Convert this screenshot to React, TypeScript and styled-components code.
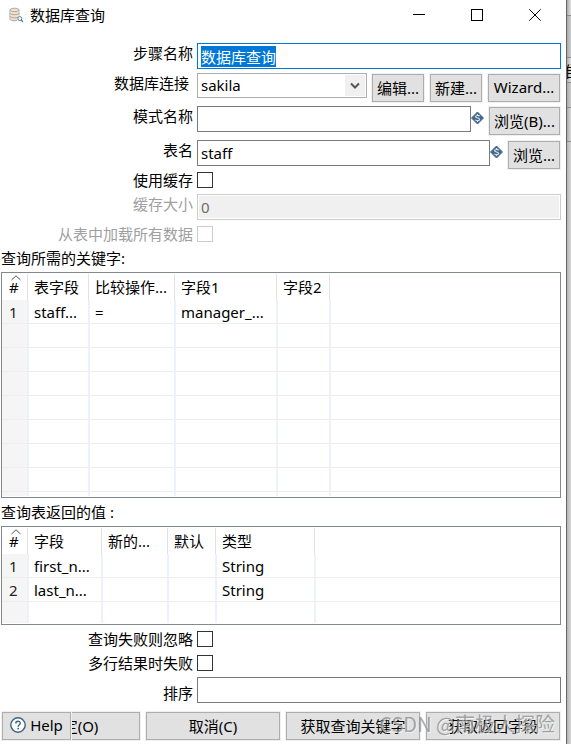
import React, { useEffect, useRef } from 'react';
import styled, { createGlobalStyle, css } from 'styled-components';

const GlobalStyle = createGlobalStyle`
  *, *::before, *::after { box-sizing: border-box; }
  body { margin: 0; background: #fff; }
  body, button, input, select, table {
    font-family: "Noto Sans", "Noto Sans CJK SC", sans-serif;
    font-size: 15px;
    color: #000;
  }
`;

const Screen = styled.div`
  display: flex;
  min-height: 100vh;
  overflow: hidden;
`;

const Dialog = styled.main`
  flex: 1;
  min-width: 0;
  display: flex;
  flex-direction: column;
  background: #fff;
  border-right: 1px solid #666;
`;

const Backdrop = styled.aside`
  flex: none;
  width: 4px;
  overflow: hidden;
  background: linear-gradient(to right, #b4b4b4, #d8d8d8);
`;

const BackdropBand = styled.div<{ $height: number; $tone: string }>`
  display: flex;
  justify-content: center;
  align-items: center;
  height: ${(p) => p.$height}px;
  border-bottom: 1px solid #8c8c8c;
  background: linear-gradient(to right, #a8a8a8, ${(p) => p.$tone});
`;

const TitleBar = styled.header`
  display: flex;
  align-items: center;
  height: 30px;
  padding: 0 2px 0 8px;
`;

const Title = styled.h1`
  flex: 1;
  margin: 0 0 0 6px;
  font-size: 15px;
  font-weight: 400;
  line-height: 22px;
`;

const CaptionButton = styled.button`
  display: flex;
  align-items: center;
  justify-content: center;
  width: 58px;
  height: 30px;
  padding: 0;
  border: 0;
  background: transparent;
`;

const Form = styled.form`
  display: flex;
  flex-direction: column;
  padding: 13px 5px 3px 0;
`;

const Row = styled.div<{ $gap?: number }>`
  display: grid;
  grid-template-columns: 193px minmax(0, 1fr);
  column-gap: 4px;
  margin-top: ${(p) => p.$gap ?? 0}px;
`;

const Label = styled.label<{ $muted?: boolean; $inset?: boolean; $low?: boolean; $tight?: boolean }>`
  text-align: right;
  white-space: nowrap;
  line-height: ${(p) => (p.$tight ? 16 : 20)}px;
  padding-right: ${(p) => (p.$inset ? 4 : 0)}px;
  padding-top: ${(p) => (p.$low ? 6 : 0)}px;
  color: ${(p) => (p.$muted ? '#a0a0a0' : '#000')};
`;

const Controls = styled.div`
  display: flex;
  align-items: flex-start;
  gap: 4px;
`;

const FieldWithIcon = styled.div`
  flex: 1;
  min-width: 0;
  display: flex;
`;

const TextField = styled.input`
  flex: 1;
  min-width: 0;
  width: 100%;
  height: 26px;
  padding: 0 3px;
  border: 1px solid #7a7a7a;
  border-radius: 0;
  background: #fff;
  outline: none;

  &:focus { border-color: #0078d7; }
  &::selection { background: #0078d7; color: #fff; }
  &:disabled {
    border-color: #ccc;
    background: #f0f0f0;
    box-shadow: inset 0 0 0 1px #fff;
    color: #6d6d6d;
  }
`;

const SelectBox = styled.div`
  position: relative;
  flex: 1;
  min-width: 0;
  height: 25px;
`;

const Select = styled.select`
  appearance: none;
  width: 100%;
  height: 100%;
  padding: 0 24px 2px 3px;
  border: 1px solid #adadad;
  border-radius: 0;
  background: #fff;
`;

const SelectArrow = styled.span`
  position: absolute;
  top: 2px;
  right: 2px;
  display: flex;
  align-items: center;
  justify-content: center;
  width: 20px;
  height: 21px;
  background: #f0f0f0;
  pointer-events: none;
`;

const buttonFace = css`
  display: flex;
  align-items: center;
  justify-content: center;
  height: 28px;
  margin: 1px;
  padding: 0 0 2px;
  border: 1px solid #adadad;
  border-radius: 0;
  background: #e1e1e1;
  box-shadow: 0 0 0 1px #f0f0f0;
  white-space: nowrap;
`;

const PushButton = styled.button<{ $width: number }>`
  ${buttonFace}
  flex: none;
  width: ${(p) => p.$width}px;
`;

const CheckBox = styled.input`
  appearance: none;
  width: 16px;
  height: 16px;
  margin: 0;
  border: 1px solid #333;
  background: #fff;

  &:disabled { border-color: #ccc; }
`;

const SectionTitle = styled.h2<{ $gap: number }>`
  margin: ${(p) => p.$gap}px 0 4px 1px;
  font-size: 15px;
  font-weight: 400;
  line-height: 20px;
`;

const GridBox = styled.div<{ $height: number }>`
  height: ${(p) => p.$height}px;
  margin-left: 1px;
  padding-bottom: 1px;
  border: 1px solid #828790;
  overflow: hidden;
`;

const GridClip = styled.div`
  height: 100%;
  overflow: hidden;
`;

const Table = styled.table`
  width: 100%;
  table-layout: fixed;
  border-collapse: separate;
  border-spacing: 0;
`;

const Column = styled.col<{ $width?: number }>`
  width: ${(p) => (p.$width ? `${p.$width}px` : 'auto')};
`;

const HeadCell = styled.th`
  position: relative;
  height: 27px;
  padding: 1px 0 0 5px;
  font-weight: 400;
  line-height: 22px;
  text-align: left;
  white-space: nowrap;

  &:first-child { padding-left: 7px; }
  &:not(:last-child)::after {
    content: "";
    position: absolute;
    top: 1px;
    bottom: 0;
    right: 1px;
    width: 1px;
    background: #e2e2e2;
  }
`;

const SortMark = styled.svg`
  position: absolute;
  top: 2px;
  left: 9px;
`;

const Cell = styled.td`
  height: 24px;
  padding: 1px 0 0 5px;
  border-bottom: 1px solid #ededed;
  border-right: 2px solid #edf2fa;
  line-height: 22px;
  white-space: nowrap;
  overflow: hidden;

  &:last-child { border-right: 0; }
  &:first-child {
    padding-left: 7px;
    background: #f5f5f5;
    color: #222;
  }
`;

const Footer = styled.footer`
  position: relative;
  display: grid;
  grid-template-columns: repeat(4, minmax(0, 1fr));
  gap: 4px;
  margin-top: 8px;
  padding-left: 5px;
`;

const ActionButton = styled.button`
  ${buttonFace}
`;

const HelpButton = styled.button`
  ${buttonFace}
  position: absolute;
  top: 0;
  left: 1px;
  width: 69px;
  gap: 4px;
`;

const Watermark = styled.span`
  position: absolute;
  right: 6px;
  top: 0;
  font-family: "Noto Sans CJK SC", sans-serif;
  font-size: 20px;
  line-height: 26px;
  color: rgba(130, 130, 130, 0.7);
  text-shadow: 1px 1px 0 rgba(255, 255, 255, 0.6);
  white-space: nowrap;
  pointer-events: none;
`;

const VariableIcon = () => (
  <svg width="13" height="26" viewBox="0 0 13 26" aria-hidden="true">
    <path d="M6.5 6 L12.5 12 L6.5 18 L0.5 12 Z" fill="#41698a" stroke="#41698a" strokeLinejoin="round" />
    <path
      d="M8.6 10.2 C8.2 9.3 4.6 9 4.6 10.7 C4.6 12.3 8.6 11.7 8.6 13.4 C8.6 15 5 14.9 4.4 13.8 M6.5 8 V9.4 M6.5 14.6 V16"
      fill="none"
      stroke="#d5e2eb"
      strokeWidth="1.2"
    />
  </svg>
);

const DatabaseIcon = () => (
  <svg width="16" height="16" viewBox="0 0 16 16" aria-hidden="true">
    <path d="M2 3 V12 C2 14.3 11 14.3 11 12 V3" fill="#f8dfc0" />
    <path
      d="M2 3 C2 0.6 11 0.6 11 3 C11 5.2 2 5.2 2 3 Z M2 6 C2 8.2 11 8.2 11 6 M2 9 C2 11.2 9 11.2 10 10 M2 12 C2 13.8 7 14.2 9 13.4"
      fill="#f8dfc0"
      stroke="#9aaab3"
      strokeWidth="1"
    />
    <path d="M1.8 3 V12.5 M11.2 3 V8.5" stroke="#a9b5bc" strokeWidth="0.8" />
    <circle cx="11.8" cy="11.6" r="2" fill="#fff" stroke="#557f9e" />
    <path d="M13.2 13 L15 15" stroke="#557f9e" strokeWidth="1.2" />
  </svg>
);

const HelpIcon = () => (
  <svg width="16" height="16" viewBox="0 0 16 16" aria-hidden="true">
    <circle cx="8" cy="8" r="7.2" fill="#fff" stroke="#3d6480" strokeWidth="1.4" />
    <path
      d="M5.8 6.4 C5.8 3.5 10.3 3.6 10.3 6.2 C10.3 7.8 8.1 7.8 8.1 9.7"
      fill="none"
      stroke="#3d6480"
      strokeWidth="1.4"
    />
    <rect x="7.3" y="10.8" width="1.6" height="1.6" fill="#3d6480" />
  </svg>
);

type GridProps = {
  label: string;
  height: number;
  columns: { title: string; width: number }[];
  rows: string[][];
  rowCount: number;
};

const DataGrid = ({ label, height, columns, rows, rowCount }: GridProps) => (
  <GridBox $height={height}>
    <GridClip>
      <Table aria-label={label}>
        <colgroup>
          {columns.map((c) => (
            <Column key={c.title} $width={c.width} />
          ))}
          <Column />
        </colgroup>
        <thead>
          <tr>
            {columns.map((c, i) => (
              <HeadCell key={c.title} scope="col">
                {i === 0 && (
                  <SortMark width="10" height="6" viewBox="0 0 10 6" aria-hidden="true">
                    <path d="M0.5 5 L5 0.8 L9.5 5" fill="none" stroke="#555" />
                  </SortMark>
                )}
                {c.title}
              </HeadCell>
            ))}
            <HeadCell as="td" />
          </tr>
        </thead>
        <tbody>
          {Array.from({ length: rowCount }, (_, r) => (
            <tr key={r}>
              {columns.map((c, i) => (
                <Cell key={c.title}>{rows[r]?.[i] ?? ''}</Cell>
              ))}
              <Cell />
            </tr>
          ))}
        </tbody>
      </Table>
    </GridClip>
  </GridBox>
);

const keyColumns = [
  { title: '#', width: 27 },
  { title: '表字段', width: 61 },
  { title: '比较操作...', width: 86 },
  { title: '字段1', width: 102 },
  { title: '字段2', width: 53 },
];

const valueColumns = [
  { title: '#', width: 27 },
  { title: '字段', width: 74 },
  { title: '新的...', width: 66 },
  { title: '默认', width: 48 },
  { title: '类型', width: 99 },
];

export default function App() {
  const stepName = useRef<HTMLInputElement>(null);

  useEffect(() => {
    stepName.current?.focus();
    stepName.current?.select();
  }, []);

  return (
    <Screen>
      <GlobalStyle />
      <Dialog>
        <TitleBar>
          <DatabaseIcon />
          <Title>数据库查询</Title>
          <CaptionButton type="button" aria-label="最小化">
            <svg width="12" height="12" viewBox="0 0 12 12">
              <path d="M0 5.5 H12" stroke="#000" />
            </svg>
          </CaptionButton>
          <CaptionButton type="button" aria-label="最大化">
            <svg width="12" height="12" viewBox="0 0 12 12">
              <rect x="0.5" y="0.5" width="11" height="11" fill="none" stroke="#000" />
            </svg>
          </CaptionButton>
          <CaptionButton type="button" aria-label="关闭">
            <svg width="12" height="12" viewBox="0 0 12 12">
              <path d="M0.3 0.3 L11.7 11.7 M11.7 0.3 L0.3 11.7" stroke="#000" />
            </svg>
          </CaptionButton>
        </TitleBar>

        <Form onSubmit={(e) => e.preventDefault()}>
          <Row>
            <Label htmlFor="step">步骤名称</Label>
            <TextField id="step" ref={stepName} defaultValue="数据库查询" />
          </Row>
          <Row $gap={4}>
            <Label htmlFor="connection" $inset>数据库连接</Label>
            <Controls>
              <SelectBox>
                <Select id="connection" defaultValue="sakila">
                  <option value="sakila">sakila</option>
                </Select>
                <SelectArrow>
                  <svg width="10" height="8" viewBox="0 0 10 8" aria-hidden="true">
                    <path d="M1 1.5 L5 5.5 L9 1.5" fill="none" stroke="#555" strokeWidth="2" />
                  </svg>
                </SelectArrow>
              </SelectBox>
              <PushButton type="button" $width={52}>编辑...</PushButton>
              <PushButton type="button" $width={52}>新建...</PushButton>
              <PushButton type="button" $width={72}>Wizard...</PushButton>
            </Controls>
          </Row>
          <Row $gap={3}>
            <Label htmlFor="schema">模式名称</Label>
            <Controls>
              <FieldWithIcon>
                <TextField id="schema" />
                <VariableIcon />
              </FieldWithIcon>
              <PushButton type="button" $width={71}>浏览(B)...</PushButton>
            </Controls>
          </Row>
          <Row $gap={4}>
            <Label htmlFor="table">表名</Label>
            <Controls>
              <FieldWithIcon>
                <TextField id="table" defaultValue="staff" />
                <VariableIcon />
              </FieldWithIcon>
              <PushButton type="button" $width={52}>浏览...</PushButton>
            </Controls>
          </Row>
          <Row $gap={2}>
            <Label htmlFor="cache" $tight>使用缓存</Label>
            <CheckBox id="cache" type="checkbox" />
          </Row>
          <Row $gap={6}>
            <Label htmlFor="cacheSize" $muted>缓存大小</Label>
            <TextField id="cacheSize" defaultValue="0" disabled />
          </Row>
          <Row $gap={6}>
            <Label htmlFor="loadAll" $muted $tight>从表中加载所有数据</Label>
            <CheckBox id="loadAll" type="checkbox" disabled />
          </Row>

          <SectionTitle $gap={6}>查询所需的关键字:</SectionTitle>
          <DataGrid
            label="查询所需的关键字"
            height={226}
            columns={keyColumns}
            rows={[['1', 'staff...', '=', 'manager_...', '']]}
            rowCount={9}
          />

          <SectionTitle $gap={4}>查询表返回的值 :</SectionTitle>
          <DataGrid
            label="查询表返回的值"
            height={99}
            columns={valueColumns}
            rows={[
              ['1', 'first_n...', '', '', 'String'],
              ['2', 'last_n...', '', '', 'String'],
            ]}
            rowCount={3}
          />

          <Row $gap={6}>
            <Label htmlFor="ignoreFail" $tight>查询失败则忽略</Label>
            <CheckBox id="ignoreFail" type="checkbox" />
          </Row>
          <Row $gap={8}>
            <Label htmlFor="multiFail" $tight>多行结果时失败</Label>
            <CheckBox id="multiFail" type="checkbox" />
          </Row>
          <Row $gap={6}>
            <Label htmlFor="order" $low>排序</Label>
            <TextField id="order" />
          </Row>

          <Footer>
            <ActionButton type="submit">确定(O)</ActionButton>
            <ActionButton type="button">取消(C)</ActionButton>
            <ActionButton type="button">获取查询关键字</ActionButton>
            <ActionButton type="button">获取返回字段</ActionButton>
            <HelpButton type="button">
              <HelpIcon />
              Help
            </HelpButton>
            <Watermark>CSDN @南极人探险</Watermark>
          </Footer>
        </Form>
      </Dialog>
      <Backdrop>
        <BackdropBand $height={16} $tone="#e4e4e4" />
        <BackdropBand $height={42} $tone="#cfcfcf" />
        <BackdropBand $height={25} $tone="#e6e6e6">准</BackdropBand>
        <BackdropBand $height={25} $tone="#cfcfcf" />
        <BackdropBand $height={34} $tone="#dcdcdc" />
      </Backdrop>
    </Screen>
  );
}
